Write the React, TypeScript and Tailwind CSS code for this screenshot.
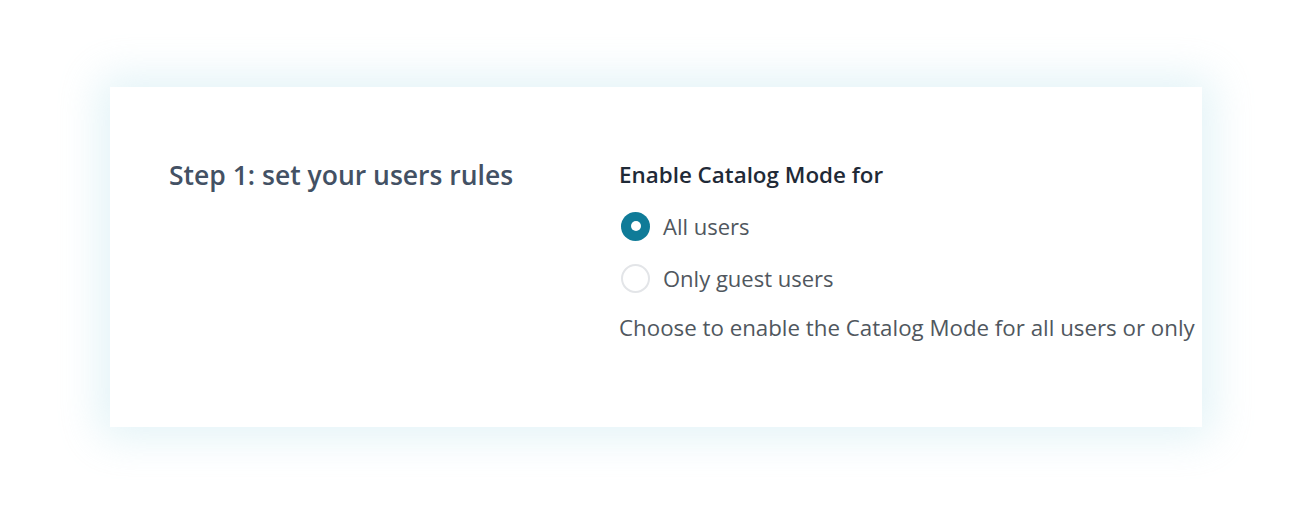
import { useState } from "react";

const options = [
  { id: "all", label: "All users" },
  { id: "guests", label: "Only guest users" },
];

export default function App() {
  const [value, setValue] = useState("all");

  return (
    <div
      className="h-[523px] w-[1300px] bg-white pt-[87px] pl-[110px]"
      style={{ fontFamily: '"Open Sans", "Noto Sans", sans-serif' }}
    >
      <div className="flex h-[340px] w-[1092px] overflow-hidden bg-white pl-[59px] pt-[72px] shadow-[0_0_40px_10px_rgba(190,228,238,0.45)]">
        <h2 className="w-[450px] shrink-0 text-[26.5px] leading-[32px] font-semibold text-[#435164]">
          Step 1: set your users rules
        </h2>
        <div className="flex flex-col whitespace-nowrap">
          <div className="text-[22.4px] leading-[32px] font-semibold text-[#1f2a37]">
            Enable Catalog Mode for
          </div>
          <div className="mt-[20px] flex flex-col gap-[22px]">
            {options.map((o) => {
              const checked = value === o.id;
              return (
                <label
                  key={o.id}
                  className="flex cursor-pointer items-center gap-[13px] text-[22px] leading-[30px] text-[#50575e]"
                  onClick={() => setValue(o.id)}
                >
                  <span
                    className={
                      checked
                        ? "ml-[2px] flex h-[29px] w-[29px] items-center justify-center rounded-full bg-[#0f7b98]"
                        : "ml-[2px] h-[29px] w-[29px] rounded-full border-2 border-[#e3e5e8] bg-white"
                    }
                  >
                    {checked ? <span className="h-[10px] w-[10px] rounded-full bg-white" /> : null}
                  </span>
                  {o.label}
                </label>
              );
            })}
          </div>
          <p className="mt-[20px] text-[22.3px] leading-[30px] text-[#50575e]">
            Choose to enable the Catalog Mode for all users or only
          </p>
        </div>
      </div>
    </div>
  );
}
